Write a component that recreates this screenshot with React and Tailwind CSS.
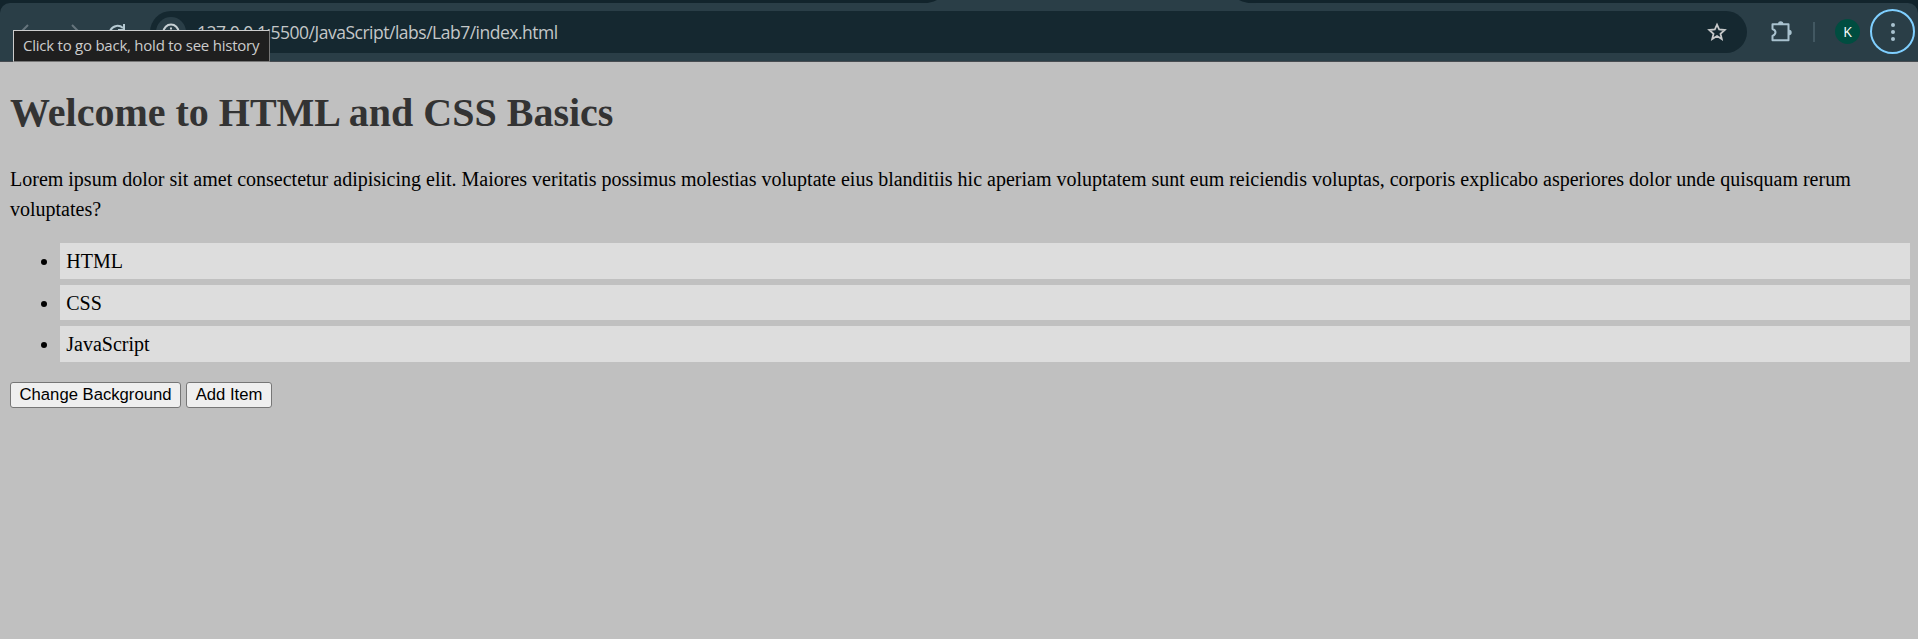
const items = ["HTML", "CSS", "JavaScript"];

function Toolbar() {
  return (
    <header className="relative h-[62px] bg-[#12242c] pt-[3px] font-['Open_Sans',sans-serif]">
      <svg className="absolute left-[920px] top-0" width="336" height="4" viewBox="0 0 336 4">
        <path d="M0 4 Q11 3 17 0 H319 Q325 3 336 4 Z" fill="#2a3e47" />
      </svg>
      <div className="flex h-[59px] items-center rounded-t-[10px] border-b border-[#474c51] bg-[#2a3e47] pb-[1px] pl-[18px] pr-[3px]">
        <svg width="110" height="24" viewBox="0 0 110 24" fill="none" className="shrink-0">
          <path d="M10 5 L3 12 L10 19 M3 12 H18" stroke="#66757d" strokeWidth="2" />
          <path d="M54 5 L61 12 L54 19 M61 12 H46" stroke="#66757d" strokeWidth="2" />
          <path d="M105 8 A8 8 0 1 0 107.500 14 M106 4 V10 H100" stroke="#b5c9d2" strokeWidth="2" />
        </svg>
        <div className="ml-[22px] flex h-[42px] w-[1597px] items-center rounded-full bg-[#152830] pl-[6px] pr-[20px]">
          <div className="flex size-[30px] items-center justify-center rounded-full bg-[#2a3e47]">
            <svg width="18" height="18" viewBox="0 0 18 18" fill="none" stroke="#c7d0d4" strokeWidth="2">
              <circle cx="9" cy="9" r="7.500" />
              <path d="M9 8 V13 M9 4.500 V6.500" />
            </svg>
          </div>
          <span className="ml-[11px] flex-1 whitespace-nowrap pt-px text-[17.5px] leading-6 tracking-[-0.49px] text-[#c4c7c8]">
            127.0.0.1:5500/JavaScript/labs/Lab7/index.html
          </span>
          <svg width="20" height="20" viewBox="0 0 20 20" fill="none" stroke="#c7c9ca" strokeWidth="1.8">
            <path d="M10 2.600 L12.200 7.500 L17.700 8 L13.500 11.700 L14.800 17 L10 14.100 L5.200 17 L6.500 11.700 L2.300 8 L7.800 7.500 Z" />
          </svg>
        </div>
        <svg className="ml-[23px]" width="24" height="24" viewBox="0 0 24 24">
          <path d="M2.500 4.300 H18.500 V20.300 H2.500 V16 Q5.500 14.500 5.500 12.300 Q5.500 10.200 2.500 9 Z" fill="none" stroke="#a9c2cf" strokeWidth="2" strokeLinejoin="round" />
          <path d="M8 4 A2.700 2.700 0 0 1 13.400 4 Z M19 9.800 A2.700 2.700 0 0 1 19 15.200 Z" fill="#a9c2cf" />
        </svg>
        <div className="ml-[19px] h-5 w-[2px] bg-[#425862]" />
        <div className="ml-5 flex size-[25px] items-center justify-center rounded-full bg-[#004d40] text-[14px] text-white">K</div>
        <div className="ml-[10px] flex size-[45px] flex-col items-center justify-center gap-[3px] rounded-full border-2 border-[#7fcfff]">
          <i className="size-1 rounded-full bg-[#a9c2cf]" />
          <i className="size-1 rounded-full bg-[#a9c2cf]" />
          <i className="size-1 rounded-full bg-[#a9c2cf]" />
        </div>
      </div>
      <div className="absolute left-[13px] top-[30px] flex h-8 w-[257px] items-center whitespace-nowrap border border-[#777] border-l-[#ccc] border-t-[#ccc] bg-[#1f1f1f] pb-[2px] pl-[9px] text-[15px] tracking-[-0.24px] text-[#ccc]">
        Click to go back, hold to see history
      </div>
    </header>
  );
}

export default function App() {
  return (
    <div className="flex h-[639px] flex-col overflow-hidden bg-[#c0c0c0]">
      <Toolbar />
      <main className="pl-[10px] pr-[8px] pt-[28px] font-['Liberation_Serif',serif] text-[20px] text-black">
        <h1 className="text-[40px] font-bold leading-[46px] text-[#333]">Welcome to HTML and CSS Basics</h1>
        <p className="mt-[28px] leading-[30px]">
          Lorem ipsum dolor sit amet consectetur adipisicing elit. Maiores veritatis possimus molestias voluptate eius blanditiis hic aperiam voluptatem sunt eum reiciendis voluptas, corporis explicabo asperiores dolor unde quisquam rerum voluptates?
        </p>
        <ul className="mt-[19px] flex list-disc flex-col gap-[6px] pl-[50px]">
          {items.map((item) => (
            <li key={item} className="list-item h-[35.5px] bg-[#ddd] pl-[6.25px] pt-px leading-[35px]">{item}</li>
          ))}
        </ul>
        <div className="mt-[20.5px] flex gap-[5px] font-['Liberation_Sans',sans-serif] text-[16.67px]">
          <button className="h-[26px] w-[171px] rounded-[3px] border border-[#767676] bg-[#efefef] leading-[24px]">Change Background</button>
          <button className="h-[26px] w-[86px] rounded-[3px] border border-[#767676] bg-[#efefef] leading-[24px]">Add Item</button>
        </div>
      </main>
    </div>
  );
}
